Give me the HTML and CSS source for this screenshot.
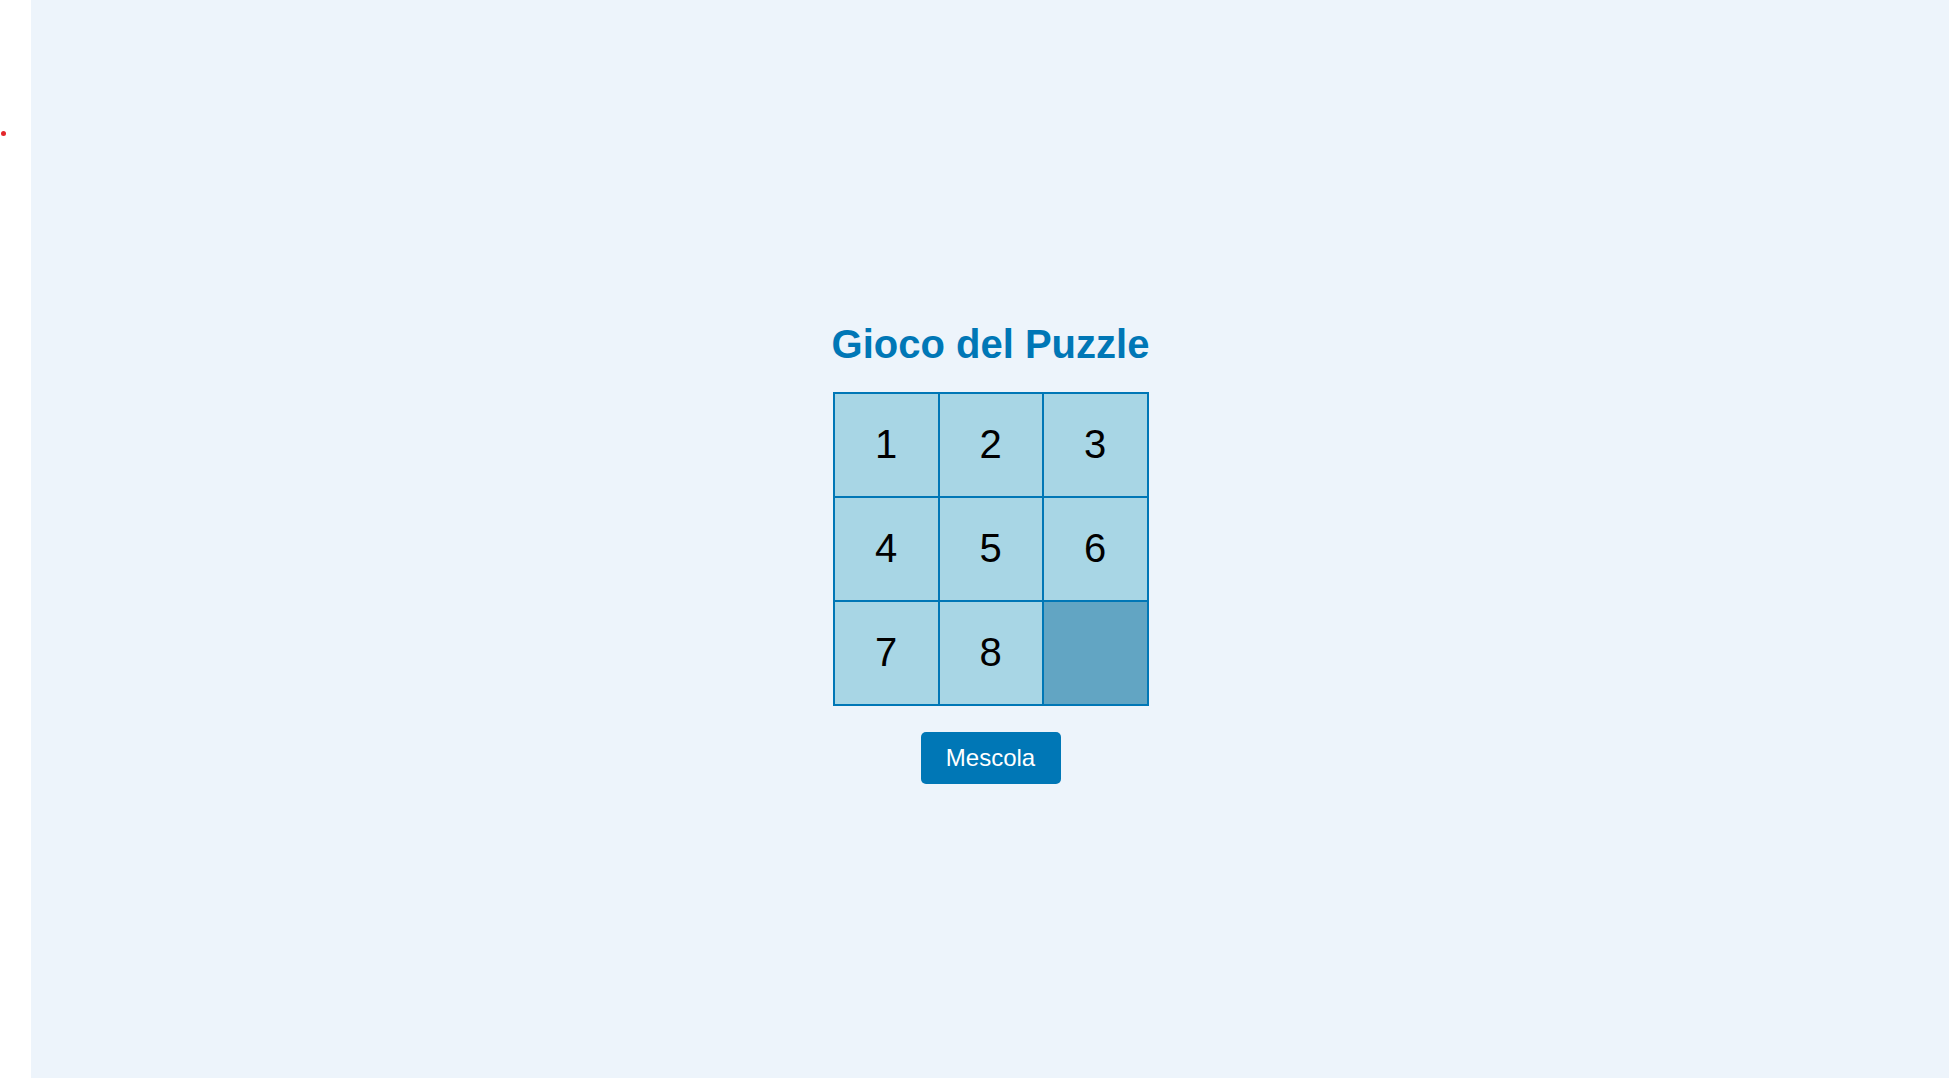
FILE: index.html
```html
<!DOCTYPE html>
<html lang="it">
<head>
<meta charset="utf-8">
<title>Gioco del Puzzle</title>
<link rel="stylesheet" href="styles.css">
</head>
<body>
<div class="page">
  <aside class="rail"><span class="dot"></span></aside>
  <main class="stage">
    <h1 class="title">Gioco del Puzzle</h1>
    <div class="board">
      <div class="tile">1</div>
      <div class="tile">2</div>
      <div class="tile">3</div>
      <div class="tile">4</div>
      <div class="tile">5</div>
      <div class="tile">6</div>
      <div class="tile">7</div>
      <div class="tile">8</div>
      <div class="tile empty"></div>
    </div>
    <button class="shuffle" type="button">Mescola</button>
  </main>
</div>
</body>
</html>
```

FILE: styles.css
```css
html, body {
  margin: 0;
  padding: 0;
  height: 100%;
}
body {
  font-family: "Liberation Sans", Arial, sans-serif;
  background: #ffffff;
}
.page {
  display: flex;
  height: 1078px;
}
.rail {
  width: 31px;
  flex: 0 0 31px;
  background: #ffffff;
  position: relative;
}
.dot {
  position: absolute;
  left: 1px;
  top: 131px;
  width: 5px;
  height: 5px;
  border-radius: 50%;
  background: #e3262b;
}
.stage {
  flex: 1;
  background: #edf4fb;
  display: flex;
  flex-direction: column;
  align-items: center;
  justify-content: center;
  padding-top: 27px;
  padding-left: 1px;
  box-sizing: border-box;
}
.title {
  margin: 0 0 25px;
  font-size: 40px;
  font-weight: bold;
  color: #0077b6;
  line-height: 46px;
}
.board {
  display: grid;
  grid-template-columns: 103px 102px 103px;
  grid-auto-rows: 102px;
  gap: 2px;
  padding: 2px;
  background: #0077b6;
}
.tile {
  background: #a8d6e5;
  display: flex;
  align-items: center;
  justify-content: center;
  font-size: 40px;
  color: #000000;
  padding-bottom: 2px;
  box-sizing: border-box;
}
.tile.empty {
  background: #62a5c3;
}
.shuffle {
  margin-top: 26px;
  width: 140px;
  height: 52px;
  border: none;
  border-radius: 5px;
  background: #0077b6;
  color: #ffffff;
  font-family: "Liberation Sans", Arial, sans-serif;
  font-size: 24px;
  padding: 0;
}
```
